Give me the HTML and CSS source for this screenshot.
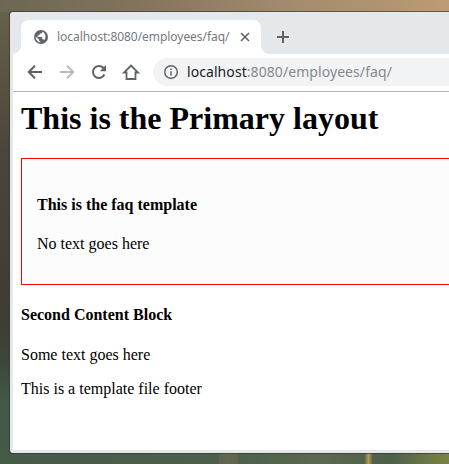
FILE: index.html
```html
<!DOCTYPE html>
<html lang="en">
<head>
<meta charset="utf-8">
<title>localhost:8080/employees/faq/</title>
<link rel="stylesheet" href="styles.css">
</head>
<body>
<div class="window">
  <div class="tabstrip">
    <div class="tab">
      <svg class="globe" viewBox="0 0 14 14"><circle cx="7" cy="7" r="7"/><path class="land" d="M8.300 1.600v.7c0 .8-.6 1.300-1.400 1.300H5.600v1.200c0 .4-.3.7-.7.7H3.600V7h3.800c.5 0 .8.3.8.8v1.500h.7c.6 0 1.100.4 1.300.9A5.500 5.500 0 0 0 8.300 1.600zM1.600 6.400a5.500 5.500 0 0 0 4.700 6v-1.100c-.8 0-1.400-.6-1.400-1.400v-.6z"/></svg>
      <span class="tab-title">localhost:8080/employees/faq/</span>
      <svg class="close" viewBox="0 0 10 10"><path d="M1 1l8 8M9 1L1 9"/></svg>
    </div>
    <svg class="plus" viewBox="0 0 12 12"><path d="M6 0v12M0 6h12"/></svg>
  </div>
  <div class="toolbar">
    <svg class="nav" viewBox="0 0 16 16"><path d="M15 8H2M8 1.700L1.700 8 8 14.300"/></svg>
    <svg class="nav disabled" viewBox="0 0 16 16"><path d="M1 8h13M8 1.700L14.300 8 8 14.300"/></svg>
    <svg class="nav" viewBox="0 0 16 16"><path d="M13.400 10.500A6 6 0 1 1 12.300 3.800L14 5.500"/><path class="solid" d="M15 1v6.200H8.800z"/></svg>
    <svg class="nav home" viewBox="0 0 16 16"><path d="M1 8.500h2.500V15h9V8.500H15L8 1.500z"/></svg>
    <div class="omnibox">
      <svg class="info" viewBox="0 0 14 14"><circle cx="7" cy="7" r="6.300"/><path d="M7 6.200v4.300M7 3.500v1.400"/></svg>
      <span class="url"><b>localhost</b>:8080/employees/faq/</span>
    </div>
  </div>
  <main class="page">
    <h1>This is the Primary layout</h1>
    <section class="block">
      <h4>This is the faq template</h4>
      <p>No text goes here</p>
    </section>
    <h4>Second Content Block</h4>
    <p>Some text goes here</p>
    <footer>This is a template file footer</footer>
  </main>
</div>
</body>
</html>
```
FILE: styles.css
```css
* { box-sizing: border-box; }
html { height: 100%; overflow: hidden; }
body {
  margin: 0;
  height: 464px;
  padding: 12px 0 0 10px;
  overflow: hidden;
  background:
    linear-gradient(90deg, #5c654c, #616850, #5c654c) 219px 453px / 19px 11px no-repeat,
    linear-gradient(90deg, #6a6c47, #b59b56, #6a6c47) 365px 453px / 7px 11px no-repeat,
    linear-gradient(90deg, #455a47 0, #4c604b 230px, #5d6850 320px, #4e6048 390px, #7b8344 449px) 0 453px / 100% 11px no-repeat,
    linear-gradient(90deg, #6c6753, #83745d 140px, #a18a6d 280px, #b39670 400px, #bd9c75) 0 0 / 100% 12px no-repeat,
    linear-gradient(180deg, #68634f 0, #57513f 90px, #4b463c 150px, #3e3c33 310px, #3d4539 360px, #42584a 400px, #455a47 464px);
}
.window {
  display: flex;
  flex-direction: column;
  width: 439px;
  height: 441px;
  background: #e4e8eb;
  border-radius: 3px 0 0 3px;
  box-shadow: 0 0 0 1px rgba(50, 50, 50, .65);
  padding: 0 0 3px 3px;
  overflow: hidden;
}
.tabstrip {
  display: flex;
  align-items: flex-end;
  height: 42px;
  flex: none;
  padding-left: 8px;
  background: radial-gradient(circle at 0 0, #e4e8eb 7.500px, #fff 8px) 0 34px / 8px 8px no-repeat;
}
.tab {
  position: relative;
  display: flex;
  align-items: center;
  width: 240px;
  height: 34px;
  padding-left: 13px;
  background: #fff;
  border-radius: 8px 8px 0 0;
}
.tab::after {
  content: "";
  position: absolute;
  left: 240px;
  bottom: 0;
  width: 8px;
  height: 8px;
  background: radial-gradient(circle at 8px 0, #e4e8eb 7.500px, #fff 8px);
}
svg { flex: none; overflow: visible; }
.globe { width: 14px; height: 14px; fill: #5f6368; }
.globe .land { fill: #fff; }
.tab-title {
  width: 192px;
  padding-left: 9px;
  font: 12px/16px "Noto Sans", sans-serif;
  letter-spacing: -.05px;
  color: #75797e;
  white-space: nowrap;
}
.close { width: 10px; height: 10px; fill: none; stroke: #5f6368; stroke-width: 1.600; }
.plus { width: 12px; height: 12px; margin: 0 0 11px 16px; fill: none; stroke: #5f6368; stroke-width: 2; }
.toolbar {
  display: flex;
  align-items: center;
  height: 38px;
  flex: none;
  padding: 0 0 1px 14px;
  gap: 16px;
  background: #fff;
  border-bottom: 1px solid #b2b3b4;
}
.nav { width: 16px; height: 16px; fill: none; stroke: #5f6368; stroke-width: 2; }
.nav .solid { fill: #5f6368; stroke: none; }
.nav.home { stroke-width: 1.800; }
.nav.disabled { stroke: #bbbcbe; }
.omnibox {
  display: flex;
  align-items: center;
  flex: 1;
  height: 28px;
  margin-left: -2px;
  padding-left: 11px;
  background: #f1f3f4;
  border-radius: 14px 0 0 14px;
}
.info { width: 14px; height: 14px; fill: none; stroke: #5f6368; stroke-width: 1.500; }
.url {
  margin-left: 9px;
  font: 14px/20px "Noto Sans", sans-serif;
  letter-spacing: .07px;
  color: #85898d;
  white-space: nowrap;
}
.url b { font-weight: 400; color: #202124; }
.page {
  flex: 1;
  padding: 8px 0 0 8px;
  background: #fff;
  color: #000;
  font: 16px "Liberation Serif", serif;
  overflow: hidden;
}
h1 { margin: 0 0 21.440px; font-size: 32px; }
h4 { margin: 21.280px 0; font-size: 16px; }
p { margin: 16px 0; }
.block {
  width: 440px;
  padding: 15px;
  border: 1px solid #f00;
  background: #fcfcfc;
}
```
